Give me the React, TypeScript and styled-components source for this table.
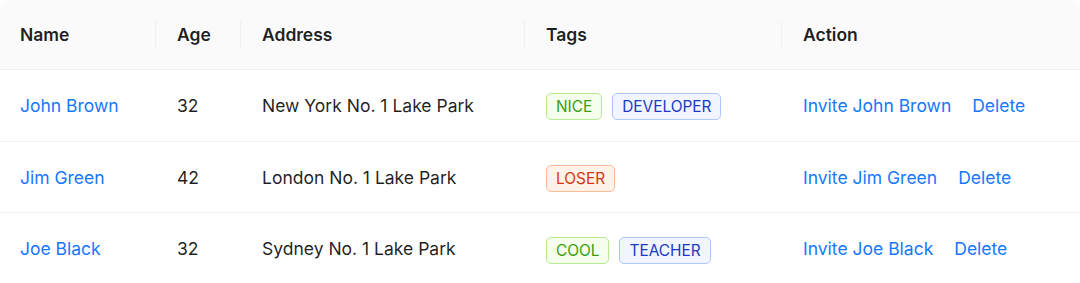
import React from 'react';
import styled, { createGlobalStyle } from 'styled-components';

const GlobalStyle = createGlobalStyle`
  body {
    margin: 0;
    background: #fff;
    font-family: Inter, "Noto Sans", sans-serif;
    -webkit-font-smoothing: antialiased;
  }
`;

type TagColor = 'green' | 'geekblue' | 'volcano';

const tagColors: Record<TagColor, { color: string; bg: string; border: string }> = {
  green: { color: '#389e0d', bg: '#f6ffed', border: '#b7eb8f' },
  geekblue: { color: '#1d39c4', bg: '#f0f5ff', border: '#adc6ff' },
  volcano: { color: '#d4380d', bg: '#fff2e8', border: '#ffbb96' },
};

interface Row {
  key: string;
  name: string;
  age: number;
  address: string;
  tags: string[];
}

const data: Row[] = [
  { key: '1', name: 'John Brown', age: 32, address: 'New York No. 1 Lake Park', tags: ['nice', 'developer'] },
  { key: '2', name: 'Jim Green', age: 42, address: 'London No. 1 Lake Park', tags: ['loser'] },
  { key: '3', name: 'Joe Black', age: 32, address: 'Sydney No. 1 Lake Park', tags: ['cool', 'teacher'] },
];

const Table = styled.table`
  width: 1080px;
  border-collapse: separate;
  border-spacing: 0;
  table-layout: fixed;
  font-size: 17.5px;
  line-height: 28px;
  color: rgba(0, 0, 0, 0.88);
`;

const Th = styled.th<{ $first?: boolean; $last?: boolean }>`
  position: relative;
  text-align: left;
  font-weight: 600;
  background: #fafafa;
  padding: 20.5px 20px 20.5px 21px;
  border-bottom: 1px solid #f0f0f0;
  border-top-left-radius: ${(p) => (p.$first ? '10px' : '0')};
  border-top-right-radius: ${(p) => (p.$last ? '10px' : '0')};

  &:first-child {
    padding-left: 20px;
  }

  &::before {
    content: ${(p) => (p.$last ? 'none' : '""')};
    position: absolute;
    right: 0;
    top: 50%;
    transform: translateY(-50%);
    width: 1px;
    height: 28px;
    background: #f0f0f0;
  }
`;

const Td = styled.td`
  padding: 21.5px 20px 20.5px 21px;
  border-bottom: 1px solid #f0f0f0;
  white-space: nowrap;

  &:first-child {
    padding-left: 20px;
  }
`;

const Link = styled.a`
  color: #1677ff;
  text-decoration: none;
  cursor: pointer;
`;

const Tag = styled.span<{ $color: TagColor }>`
  display: inline-block;
  vertical-align: middle;
  margin-right: 10px;
  padding: 0 9px;
  font-size: 15.4px;
  line-height: 25px;
  border-radius: 5px;
  color: ${(p) => tagColors[p.$color].color};
  background: ${(p) => tagColors[p.$color].bg};
  border: 1px solid ${(p) => tagColors[p.$color].border};
`;

const Actions = styled.div`
  display: flex;
  gap: 21px;
`;

const tagColor = (tag: string): TagColor => {
  if (tag === 'loser') return 'volcano';
  return tag.length > 5 ? 'geekblue' : 'green';
};

export default function App() {
  return (
    <>
      <GlobalStyle />
      <Table>
        <colgroup>
          <col style={{ width: 156 }} />
          <col style={{ width: 85 }} />
          <col style={{ width: 284 }} />
          <col style={{ width: 257 }} />
          <col />
        </colgroup>
        <thead>
          <tr>
            <Th $first>Name</Th>
            <Th>Age</Th>
            <Th>Address</Th>
            <Th>Tags</Th>
            <Th $last>Action</Th>
          </tr>
        </thead>
        <tbody>
          {data.map((row) => (
            <tr key={row.key}>
              <Td>
                <Link>{row.name}</Link>
              </Td>
              <Td>{row.age}</Td>
              <Td>{row.address}</Td>
              <Td>
                {row.tags.map((tag) => (
                  <Tag key={tag} $color={tagColor(tag)}>
                    {tag.toUpperCase()}
                  </Tag>
                ))}
              </Td>
              <Td>
                <Actions>
                  <Link>Invite {row.name}</Link>
                  <Link>Delete</Link>
                </Actions>
              </Td>
            </tr>
          ))}
        </tbody>
      </Table>
    </>
  );
}
